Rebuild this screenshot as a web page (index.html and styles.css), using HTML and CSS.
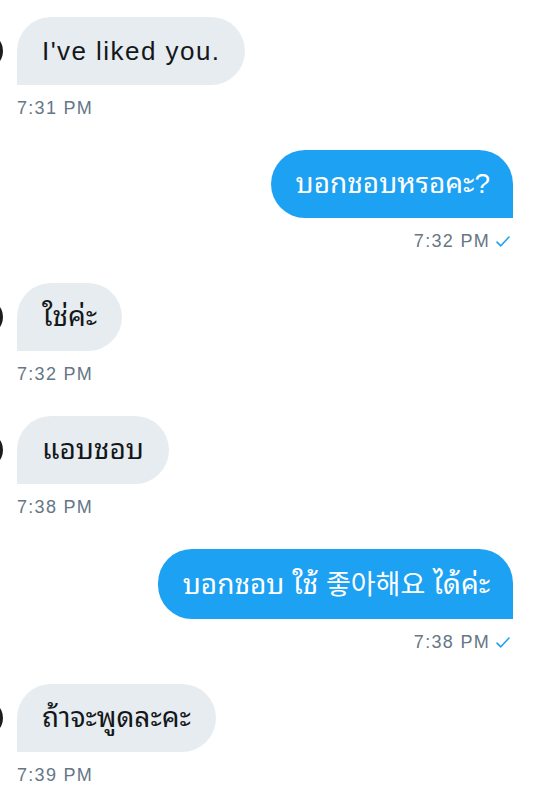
FILE: index.html
```html
<!DOCTYPE html>
<html lang="th">
<head>
<meta charset="utf-8">
<title>Messages</title>
<link rel="stylesheet" href="styles.css">
</head>
<body>
<main class="chat">
  <div class="msg in">
    <div class="row"><span class="avatar"></span><div class="bubble latin">I've liked you.</div></div>
    <div class="time">7:31 PM</div>
  </div>
  <div class="msg out">
    <div class="row"><div class="bubble">บอกชอบหรอคะ?</div></div>
    <div class="time">7:32 PM <svg class="check" viewBox="0 0 14 11" width="14" height="11"><path d="M1 6.2 L4.8 9.8 L13 1"/></svg></div>
  </div>
  <div class="msg in">
    <div class="row"><span class="avatar"></span><div class="bubble">ใช่ค่ะ</div></div>
    <div class="time">7:32 PM</div>
  </div>
  <div class="msg in">
    <div class="row"><span class="avatar"></span><div class="bubble">แอบชอบ</div></div>
    <div class="time">7:38 PM</div>
  </div>
  <div class="msg out">
    <div class="row"><div class="bubble">บอกชอบ ใช้ <span lang="ko">좋아해요</span> ได้ค่ะ</div></div>
    <div class="time">7:38 PM <svg class="check" viewBox="0 0 14 11" width="14" height="11"><path d="M1 6.2 L4.8 9.8 L13 1"/></svg></div>
  </div>
  <div class="msg in">
    <div class="row"><span class="avatar"></span><div class="bubble">ถ้าจะพูดละคะ</div></div>
    <div class="time">7:39 PM</div>
  </div>
</main>
</body>
</html>
```
FILE: styles.css
```css
html, body {
  margin: 0;
  padding: 0;
  background: #ffffff;
}
body {
  font-family: "Liberation Sans", "Noto Sans Thai Looped", "Loma", "Noto Sans CJK KR", sans-serif;
  color: #14171a;
  overflow: hidden;
}
.chat {
  display: flex;
  flex-direction: column;
  gap: 32px;
  padding: 17px 31px 0 17px;
}
.msg {
  display: flex;
  flex-direction: column;
}
.msg.out {
  align-items: flex-end;
}
.msg.in {
  align-items: flex-start;
}
.row {
  display: flex;
  align-items: center;
}
.msg.in .row {
  margin-left: -50px;
  gap: 14px;
}
.avatar {
  width: 36px;
  height: 36px;
  border-radius: 50%;
  background: #1c1c1c;
  flex: none;
}
.bubble {
  font-size: 28px;
  line-height: 30px;
  padding: 19px 25px 19px 25px;
  border-radius: 34px;
  white-space: nowrap;
}
.bubble.latin {
  font-size: 26px;
  letter-spacing: 1.45px;
}
.bubble [lang="ko"] {
  font-family: "Noto Sans CJK KR", sans-serif;
  font-size: 27px;
}
.msg.in .bubble {
  background: #e6ecf0;
  color: #14171a;
  border-bottom-left-radius: 0;
}
.msg.out .bubble {
  background: #1da1f2;
  color: #ffffff;
  border-bottom-right-radius: 0;
  padding-right: 23px;
}
.time {
  margin-top: 13px;
  font-size: 18px;
  line-height: 20px;
  letter-spacing: 1.3px;
  color: #657786;
  display: flex;
  align-items: center;
  gap: 6px;
}
.msg.out .time {
  margin-right: 3px;
}
.check {
  fill: none;
  stroke: #1da1f2;
  stroke-width: 1.6;
  stroke-linecap: round;
  stroke-linejoin: round;
}
```
